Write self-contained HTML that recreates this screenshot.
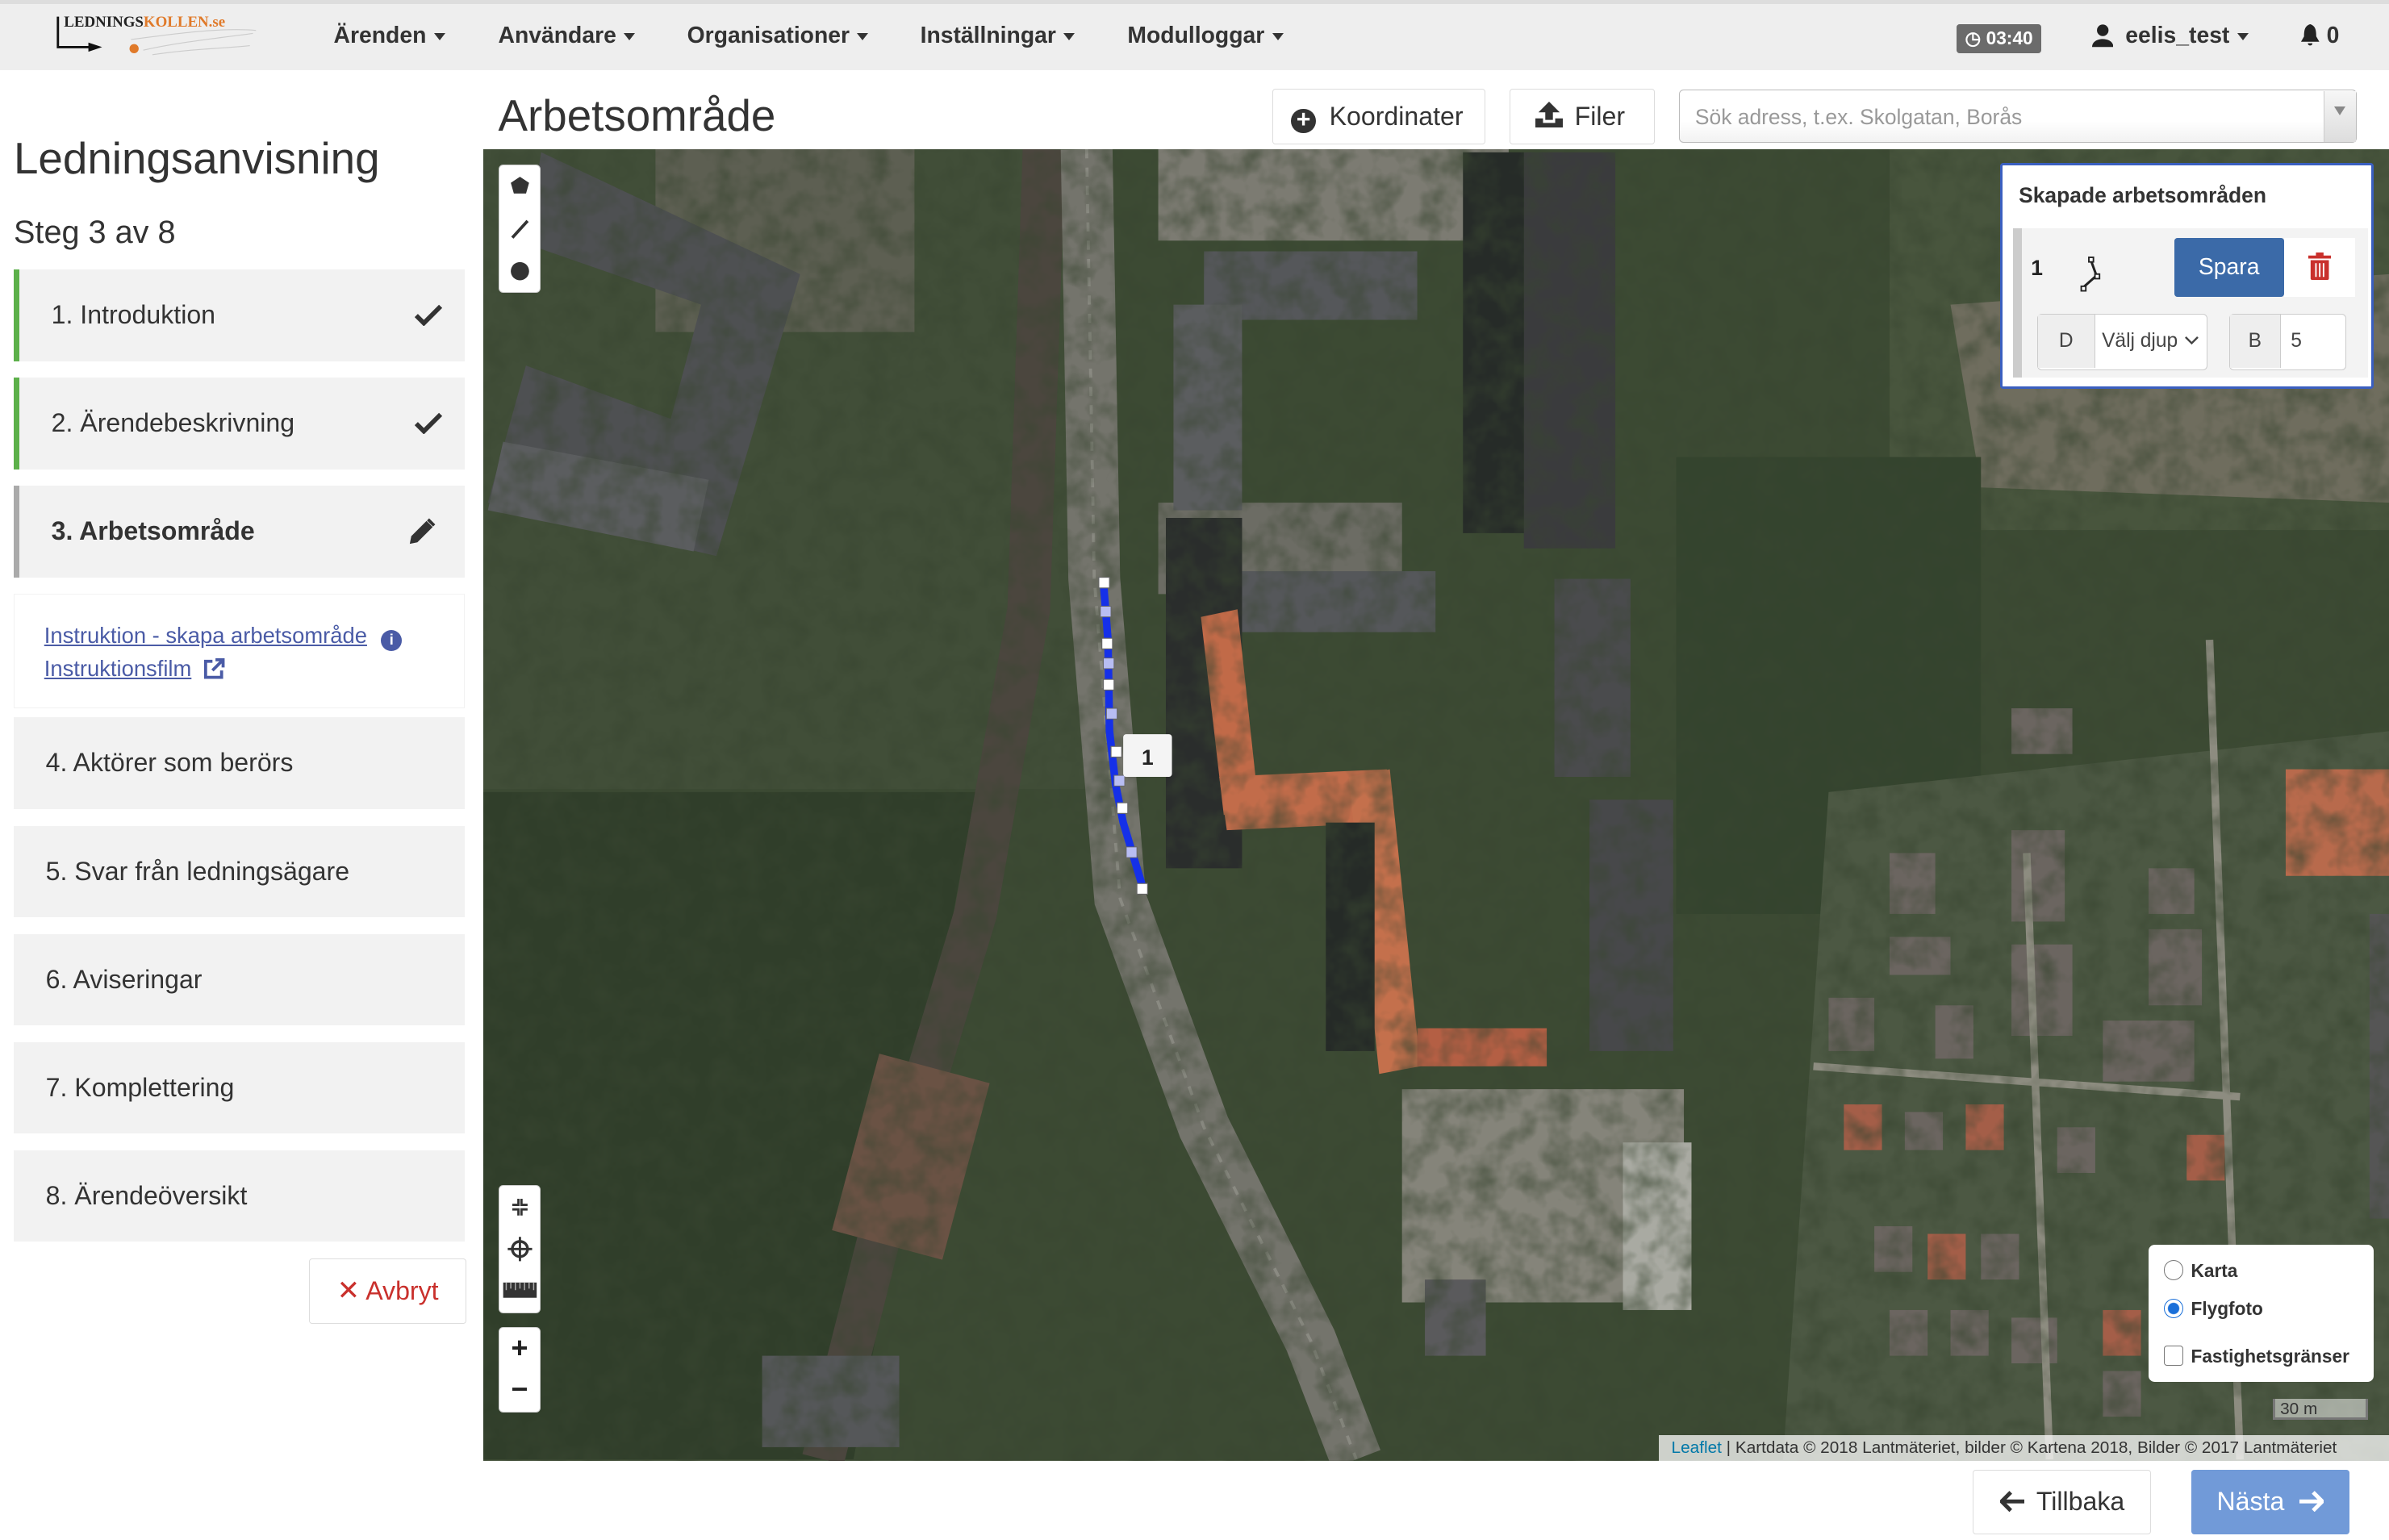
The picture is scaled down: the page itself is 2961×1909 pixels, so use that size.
<!DOCTYPE html>
<html><head><meta charset="utf-8">
<style>
html,body{margin:0;padding:0;}
body{width:1568px;height:1011px;zoom:1.88839;overflow:hidden;background:#fff;font-family:"Liberation Sans",Arial,sans-serif;color:#222;position:relative;}
.abs{position:absolute;}
.hdr{left:0;top:0;width:1568px;height:46px;background:#eee;border-top:3px solid #ddd;box-sizing:border-box;}
.nav{top:15px;font-size:15px;font-weight:bold;color:#333;}
.car{display:inline-block;width:0;height:0;border-left:4px solid transparent;border-right:4px solid transparent;border-top:5px solid #333;vertical-align:middle;margin-left:5px;}
.step{left:9px;width:296px;height:60px;background:#f2f2f2;font-size:17px;box-sizing:border-box;padding-left:21px;line-height:60px;color:#333;}
.btn{background:#fff;border:1px solid #ddd;border-radius:2px;box-sizing:border-box;font-size:17px;color:#333;}
a{color:#4a5ba6;}
</style></head><body>
<div class="abs hdr"></div>
<!-- logo -->
<svg class="abs" style="left:36px;top:8px" width="136" height="32" viewBox="0 0 136 32">
<path d="M58 25 C80 20 100 18 130 14 M50 18 C80 14 110 10 132 12 M64 28 C90 24 110 24 128 22" stroke="#ccc" fill="none" stroke-width="0.6"/>
<path d="M2 3 V23 H26" stroke="#111" fill="none" stroke-width="1.5"/>
<path d="M22 20 L31 23 L22 26Z" fill="#111"/>
<circle cx="52" cy="24" r="3" fill="#e07a2a"/>
</svg>
<div class="abs" style="left:42px;top:9px;font-family:'Liberation Serif',serif;font-weight:bold;font-size:10px;color:#222;letter-spacing:0">LEDNINGS<span style="color:#e07a2a">KOLLEN.se</span></div>
<div class="abs nav" style="left:219px">Ärenden<span class="car"></span></div>
<div class="abs nav" style="left:327px">Användare<span class="car"></span></div>
<div class="abs nav" style="left:451px">Organisationer<span class="car"></span></div>
<div class="abs nav" style="left:604px">Inställningar<span class="car"></span></div>
<div class="abs nav" style="left:740px">Modulloggar<span class="car"></span></div>
<div class="abs" style="left:1284px;top:16px;width:56px;height:19px;background:#6b6b6b;border-radius:2px;color:#fff;font-size:12px;font-weight:bold;line-height:19px;text-align:center">&#9719; 03:40</div>
<svg class="abs" style="left:1373px;top:16px" width="14" height="15" viewBox="0 0 14 15"><circle cx="7" cy="4" r="3.8" fill="#222"/><path d="M0 15 C0 8 14 8 14 15Z" fill="#222"/></svg>
<div class="abs nav" style="left:1395px">eelis_test<span class="car"></span></div>
<svg class="abs" style="left:1510px;top:16px" width="13" height="15" viewBox="0 0 13 15"><path d="M6.5 0 C3 1 2.5 4 2.5 8 L0.5 11.5 H12.5 L10.5 8 C10.5 4 10 1 6.5 0Z M5 12.5 H8 C8 14.5 5 14.5 5 12.5Z" fill="#222"/></svg>
<div class="abs nav" style="left:1527px">0</div>

<!-- sidebar -->
<div class="abs" style="left:9px;top:87px;font-size:29px;color:#333">Ledningsanvisning</div>
<div class="abs" style="left:9px;top:141px;font-size:21px;color:#333">Steg 3 av 8</div>
<div class="abs step" style="top:177px;border-left:4px solid #5cb04a">1. Introduktion</div>
<div class="abs step" style="top:248px;border-left:4px solid #5cb04a">2. Ärendebeskrivning</div>
<div class="abs step" style="top:319px;border-left:4px solid #aaa;font-weight:bold">3. Arbetsområde</div>
<svg class="abs" style="left:272px;top:199px" width="18" height="15" viewBox="0 0 18 15"><path d="M1 8 L6 13 L17 2" stroke="#333" stroke-width="3" fill="none"/></svg>
<svg class="abs" style="left:272px;top:270px" width="18" height="15" viewBox="0 0 18 15"><path d="M1 8 L6 13 L17 2" stroke="#333" stroke-width="3" fill="none"/></svg>
<svg class="abs" style="left:268px;top:340px" width="18" height="18" viewBox="0 0 18 18"><path d="M1 17 L2 12 L12 2 L16 6 L6 16Z" fill="#333"/><path d="M13 1 L17 5" stroke="#333" stroke-width="2"/></svg>
<div class="abs" style="left:9px;top:390px;width:296px;height:75px;background:#fff;border:1px solid #f2f2f2;box-sizing:border-box"></div>
<div class="abs" style="left:29px;top:406px;font-size:14.5px;line-height:22px"><a href="#x">Instruktion - skapa arbetsområde</a> <span style="display:inline-block;width:14px;height:14px;border-radius:7px;background:#4a5ba6;color:#fff;font-size:10px;font-weight:bold;text-align:center;line-height:14px;margin-left:5px;vertical-align:-1px">i</span><br><a href="#x">Instruktionsfilm</a> <svg width="14" height="14" viewBox="0 0 14 14" style="vertical-align:-2px;margin-left:4px"><path d="M6 2 H1.5 V12.5 H12 V8" stroke="#4a5ba6" stroke-width="2" fill="none"/><path d="M8 1 H13 V6 M13 1 L6 8" stroke="#4a5ba6" stroke-width="2" fill="none"/></svg></div>
<div class="abs step" style="top:471px">4. Aktörer som berörs</div>
<div class="abs step" style="top:542px">5. Svar från ledningsägare</div>
<div class="abs step" style="top:613px">6. Aviseringar</div>
<div class="abs step" style="top:684px">7. Komplettering</div>
<div class="abs step" style="top:755px">8. Ärendeöversikt</div>
<div class="abs btn" style="left:203px;top:826px;width:103px;height:43px;line-height:42px;text-align:center;color:#c9302c"><span style="font-size:18px">✕</span> Avbryt</div>

<!-- title bar -->
<div class="abs" style="left:327px;top:59px;font-size:29px;color:#333">Arbetsområde</div>
<div class="abs btn" style="left:835px;top:58px;width:140px;height:37px;line-height:36px;padding-left:12px"><span style="display:inline-block;width:16px;height:16px;border-radius:8px;background:#333;color:#fff;font-size:16px;line-height:15px;text-align:center;font-weight:bold;vertical-align:-2px;margin-right:9px">+</span>Koordinater</div>
<div class="abs btn" style="left:991px;top:58px;width:95px;height:37px;line-height:36px;padding-left:16px"><svg width="18" height="17" viewBox="0 0 18 17" style="vertical-align:-2px;margin-right:8px"><path d="M9 0 L16 7 H11.5 V12 H6.5 V7 H2Z" fill="#333"/><path d="M0 11 H5 V14 H13 V11 H18 V17 H0Z" fill="#333"/></svg>Filer</div>
<div class="abs" style="left:1102px;top:59px;width:445px;height:35px;border:1px solid #bbb;border-radius:3px;box-sizing:border-box;background:linear-gradient(#fff 60%,#f2f2f2);font-size:14px;color:#999;line-height:35px;padding-left:10px">Sök adress, t.ex. Skolgatan, Borås</div>
<div class="abs" style="left:1525px;top:60px;width:21px;height:33px;border-left:1px solid #ccc;background:linear-gradient(#f6f6f6,#ddd);"></div>
<div class="abs" style="left:1532px;top:70px;width:0;height:0;border-left:4px solid transparent;border-right:4px solid transparent;border-top:6px solid #888"></div>

<!-- map -->
<svg class="abs" style="left:317px;top:98px" width="1251" height="861" viewBox="317 98 1251 861">
<defs>
<filter id="tx" x="0" y="0" width="100%" height="100%"><feTurbulence type="fractalNoise" baseFrequency="0.06" numOctaves="3" seed="4"/><feColorMatrix type="matrix" values="0 0 0 0 0.04  0 0 0 0 0.06  0 0 0 0 0.03  0 0 0 1.2 -0.45"/></filter>
</defs>
<rect x="317" y="98" width="1251" height="861" fill="#3c4a33"/>
<rect x="1240" y="98" width="328" height="250" fill="#48553d"/>
<path d="M1280 200 L1568 180 L1568 330 L1300 320Z" fill="#6f6d5e"/>
<rect x="317" y="98" width="400" height="420" fill="#414e38"/>
<path d="M317 520 L640 520 L560 958 L317 958Z" fill="#303e2a"/>
<path d="M1100 300 L1300 300 L1300 600 L1100 600Z" fill="#34442e"/>
<path d="M1200 520 L1568 480 L1568 959 L1170 959Z" fill="#4c5843"/>
<!-- railway -->
<path d="M685 98 L675 400 L640 600 L580 800 L540 958" stroke="#4b463e" stroke-width="28" fill="none"/>
<!-- road -->
<path d="M713 98 L718 380 L735 590 L790 740 L860 880 L890 958" stroke="#74746c" stroke-width="34" fill="none"/>
<path d="M713 98 L718 380 L735 590 L790 740 L860 880 L890 958" stroke="#8a8a82" stroke-width="2" fill="none" stroke-dasharray="6 6"/>
<!-- parking / areas -->
<rect x="760" y="98" width="230" height="60" fill="#7c7b72"/>
<rect x="920" y="715" width="185" height="140" fill="#85847a"/>
<rect x="1065" y="750" width="45" height="110" fill="#a9aaa2"/>
<rect x="760" y="330" width="160" height="60" fill="#6c6c64"/>
<rect x="430" y="98" width="170" height="120" fill="#5d5f52"/>
<!-- buildings top-left U -->
<path d="M355 100 L525 180 L470 365 L320 330 L345 240 L440 275 L460 200 L345 160Z" fill="#4e5052"/>
<path d="M330 290 L465 315 L455 362 L320 335Z" fill="#5b5d5f"/>
<!-- center buildings -->
<rect x="790" y="165" width="140" height="45" fill="#55575a"/>
<rect x="770" y="200" width="45" height="135" fill="#5b5d5f"/>
<rect x="812" y="375" width="130" height="40" fill="#55575a"/>
<rect x="765" y="340" width="50" height="230" fill="#2a2d2c"/>
<path d="M788 405 L812 400 L826 530 L803 535Z" fill="#c16a48"/>
<path d="M800 510 L910 505 L915 540 L805 545Z" fill="#c26c4a"/>
<path d="M885 510 L912 505 L932 700 L905 705Z" fill="#c4704c"/>
<rect x="930" y="675" width="85" height="25" fill="#b45f44"/>
<rect x="870" y="540" width="32" height="150" fill="#252a27"/>
<!-- dark tall buildings -->
<rect x="1000" y="100" width="60" height="260" fill="#3a3b3d"/>
<rect x="1020" y="380" width="50" height="130" fill="#4a4b4d"/>
<rect x="1043" y="525" width="55" height="165" fill="#47484a"/>
<rect x="960" y="100" width="40" height="250" fill="#262b28"/>
<rect x="560" y="700" width="75" height="120" fill="#6a5244" transform="rotate(15 600 760)"/>
<rect x="935" y="840" width="40" height="50" fill="#5a5a5c"/>
<rect x="500" y="890" width="90" height="60" fill="#555759"/>
<!-- houses -->
<g fill="#6b6560">
<rect x="1320" y="465" width="40" height="30"/><rect x="1500" y="505" width="68" height="70" fill="#b86a4c"/>
<rect x="1240" y="560" width="30" height="40"/><rect x="1320" y="545" width="35" height="60"/><rect x="1410" y="570" width="30" height="30"/>
<rect x="1240" y="615" width="40" height="25"/><rect x="1320" y="620" width="40" height="60"/><rect x="1410" y="610" width="35" height="50"/>
<rect x="1200" y="655" width="30" height="35"/><rect x="1270" y="660" width="25" height="35"/><rect x="1380" y="670" width="60" height="40"/>
<rect x="1210" y="725" width="25" height="30" fill="#a45e48"/><rect x="1250" y="730" width="25" height="25"/><rect x="1290" y="725" width="25" height="30" fill="#a45e48"/>
<rect x="1350" y="740" width="25" height="30"/><rect x="1435" y="745" width="25" height="30" fill="#a45e48"/>
<rect x="1230" y="805" width="25" height="30"/><rect x="1265" y="810" width="25" height="30" fill="#a45e48"/><rect x="1300" y="810" width="25" height="30"/>
<rect x="1240" y="860" width="25" height="30"/><rect x="1280" y="860" width="25" height="30"/><rect x="1320" y="865" width="30" height="30"/>
<rect x="1380" y="860" width="25" height="30" fill="#a45e48"/><rect x="1380" y="900" width="25" height="30"/>
<rect x="1555" y="600" width="13" height="200" fill="#555"/>
</g>
<path d="M1190 700 L1470 720 M1330 560 L1345 958 M1450 420 L1470 958" stroke="#8d8c80" stroke-width="5" fill="none"/>
<rect x="317" y="98" width="1251" height="861" filter="url(#tx)"/>
<!-- drawn line -->
<path d="M724 382 L727 420 L728 480 L732 515 L737 540 L750 583" stroke="#1530e8" stroke-width="5" fill="none"/>
<g fill="#fff" stroke="#666" stroke-width="0.6">
<rect x="721" y="379" width="7" height="7"/><rect x="723" y="419" width="7" height="7"/><rect x="724" y="446" width="7" height="7"/><rect x="729" y="490" width="7" height="7"/><rect x="733" y="527" width="7" height="7"/><rect x="746" y="580" width="7" height="7"/>
</g>
<g fill="#b8bdf3" stroke="#666" stroke-width="0.5"><rect x="722" y="398" width="7" height="7"/><rect x="724" y="432" width="7" height="7"/><rect x="726" y="465" width="7" height="7"/><rect x="731" y="509" width="7" height="7"/><rect x="739" y="556" width="7" height="7"/></g>
<rect x="737" y="482" width="32" height="28" rx="2" fill="#f4f4f4"/>
<text x="753" y="502" font-size="14" font-weight="bold" text-anchor="middle" font-family="Liberation Sans" fill="#222">1</text>
</svg>

<!-- map controls -->
<div class="abs" style="left:327px;top:108px;width:28px;height:84px;background:#fff;border-radius:3px;border:1px solid #ccc;box-sizing:border-box"></div>
<svg class="abs" style="left:327px;top:108px" width="28" height="84" viewBox="0 0 28 84">
<path d="M14 8 L20 12 L18 19 L10 19 L8 12Z" fill="#333"/>
<path d="M9 48 L19 37" stroke="#333" stroke-width="2"/>
<circle cx="14" cy="70" r="6" fill="#333"/>
</svg>
<div class="abs" style="left:327px;top:778px;width:28px;height:84px;background:#fff;border-radius:3px;border:1px solid #ccc;box-sizing:border-box"></div>
<svg class="abs" style="left:327px;top:778px" width="28" height="84" viewBox="0 0 28 84">
<path d="M9 13 H13 V9 M19 13 H15 V9 M9 16 H13 V20 M19 16 H15 V20" stroke="#333" stroke-width="1.5" fill="none"/>
<circle cx="14" cy="42" r="5" stroke="#333" stroke-width="1.8" fill="none"/><path d="M14 34 V50 M6 42 H22" stroke="#333" stroke-width="1.5"/>
<rect x="3" y="64" width="22" height="10" fill="#333"/><path d="M5 64 V69 M8 64 V68 M11 64 V69 M14 64 V68 M17 64 V69 M20 64 V68 M23 64 V69" stroke="#aaa" stroke-width="0.8"/>
</svg>
<div class="abs" style="left:327px;top:871px;width:28px;height:56px;background:#fff;border-radius:3px;border:1px solid #ccc;box-sizing:border-box;text-align:center;font-size:19px;font-weight:bold;line-height:27px;color:#222">+<br>−</div>

<!-- layer box -->
<div class="abs" style="left:1410px;top:817px;width:148px;height:90px;background:#fff;border-radius:4px;"></div>
<div class="abs" style="left:1420px;top:822px;font-size:12px;font-weight:bold;color:#333;line-height:25px">
<div><span style="display:inline-block;width:13px;height:13px;border:1px solid #777;border-radius:7px;box-sizing:border-box;vertical-align:-2px;margin-right:5px"></span>Karta</div>
<div><span style="display:inline-block;width:13px;height:13px;border:1px solid #1a6fd9;border-radius:7px;box-sizing:border-box;vertical-align:-2px;margin-right:5px;background:radial-gradient(#1a6fd9 3.5px,#fff 4px)"></span>Flygfoto</div>
<div style="margin-top:6px"><span style="display:inline-block;width:13px;height:13px;border:1px solid #777;border-radius:2px;box-sizing:border-box;vertical-align:-2px;margin-right:5px"></span>Fastighetsgränser</div>
</div>
<div class="abs" style="left:1492px;top:918px;width:62px;height:14px;border:2px solid #777;border-top:none;background:rgba(255,255,255,.5);font-size:11px;color:#333;line-height:14px;padding-left:3px;box-sizing:border-box">30 m</div>
<div class="abs" style="left:1089px;top:942px;width:479px;height:17px;background:rgba(255,255,255,.75);font-size:11px;color:#333;line-height:17px;padding-left:8px;box-sizing:border-box;white-space:nowrap"><span style="color:#0078a8">Leaflet</span> | Kartdata © 2018 Lantmäteriet, bilder © Kartena 2018, Bilder © 2017 Lantmäteriet</div>

<!-- panel -->
<div class="abs" style="left:1313px;top:107px;width:245px;height:148px;background:#fff;border:2px solid #3a5fc0;border-radius:2px;box-sizing:border-box"></div>
<div class="abs" style="left:1325px;top:120px;font-size:14px;font-weight:bold;color:#333">Skapade arbetsområden</div>
<div class="abs" style="left:1321px;top:150px;width:233px;height:98px;background:#f3f3f3;border-left:6px solid #ccc;box-sizing:border-box"></div>
<div class="abs" style="left:1333px;top:168px;font-size:14px;font-weight:bold">1</div>
<svg class="abs" style="left:1362px;top:160px" width="30" height="36" viewBox="0 0 30 36"><path d="M10 10 L14 21 L5 29" stroke="#222" stroke-width="1.6" fill="none"/><rect x="9" y="9" width="3" height="3" fill="#fff" stroke="#222" stroke-width="1"/><rect x="13" y="20" width="3" height="3" fill="#fff" stroke="#222" stroke-width="1"/><rect x="4" y="28" width="3" height="3" fill="#fff" stroke="#222" stroke-width="1"/></svg>
<div class="abs" style="left:1427px;top:156px;width:72px;height:39px;background:#3b6aa8;border-radius:2px;color:#fff;font-size:15px;text-align:center;line-height:39px">Spara</div>
<div class="abs" style="left:1499px;top:156px;width:47px;height:39px;background:#fff;"></div>
<svg class="abs" style="left:1515px;top:166px" width="15" height="18" viewBox="0 0 15 18"><path d="M0 2 H15 V4 H0Z M5 0 H10 V2 H5Z M1.5 5 H13.5 V17 Q13.5 18 12.5 18 H2.5 Q1.5 18 1.5 17Z" fill="#c9302c"/><path d="M5 7 V16 M7.5 7 V16 M10 7 V16" stroke="#fff" stroke-width="1"/></svg>
<div class="abs" style="left:1337px;top:206px;width:112px;height:37px;border:1px solid #ccc;border-radius:3px;box-sizing:border-box;background:#fff;font-size:13px;color:#444"><span style="display:inline-block;width:37px;height:35px;background:#eee;border-right:1px solid #ccc;text-align:center;line-height:35px">D</span><span style="position:absolute;left:42px;top:10px">Välj djup</span><svg class="abs" style="left:96px;top:14px" width="10" height="7" viewBox="0 0 10 7"><path d="M1 1 L5 5 L9 1" stroke="#444" fill="none" stroke-width="1.3"/></svg></div>
<div class="abs" style="left:1463px;top:206px;width:77px;height:37px;border:1px solid #ccc;border-radius:3px;box-sizing:border-box;background:#fff;font-size:13px;color:#444"><span style="display:inline-block;width:33px;height:35px;background:#eee;border-right:1px solid #ccc;text-align:center;line-height:35px">B</span><span style="position:absolute;left:40px;top:10px">5</span></div>

<!-- bottom buttons -->
<div class="abs btn" style="left:1295px;top:965px;width:117px;height:42px;line-height:41px;text-align:center;font-size:17px"><svg width="16" height="14" viewBox="0 0 16 14" style="vertical-align:-1px;margin-right:8px"><path d="M7 1 L1 7 L7 13 M1 7 H16" stroke="#333" stroke-width="2.6" fill="none"/></svg>Tillbaka</div>
<div class="abs" style="left:1438px;top:965px;width:104px;height:42px;background:#719ad8;border-radius:2px;color:#fff;line-height:42px;text-align:center;font-size:17px">Nästa <svg width="16" height="14" viewBox="0 0 16 14" style="vertical-align:-1px;margin-left:5px"><path d="M9 1 L15 7 L9 13 M15 7 H0" stroke="#fff" stroke-width="2.6" fill="none"/></svg></div>
</body></html>
